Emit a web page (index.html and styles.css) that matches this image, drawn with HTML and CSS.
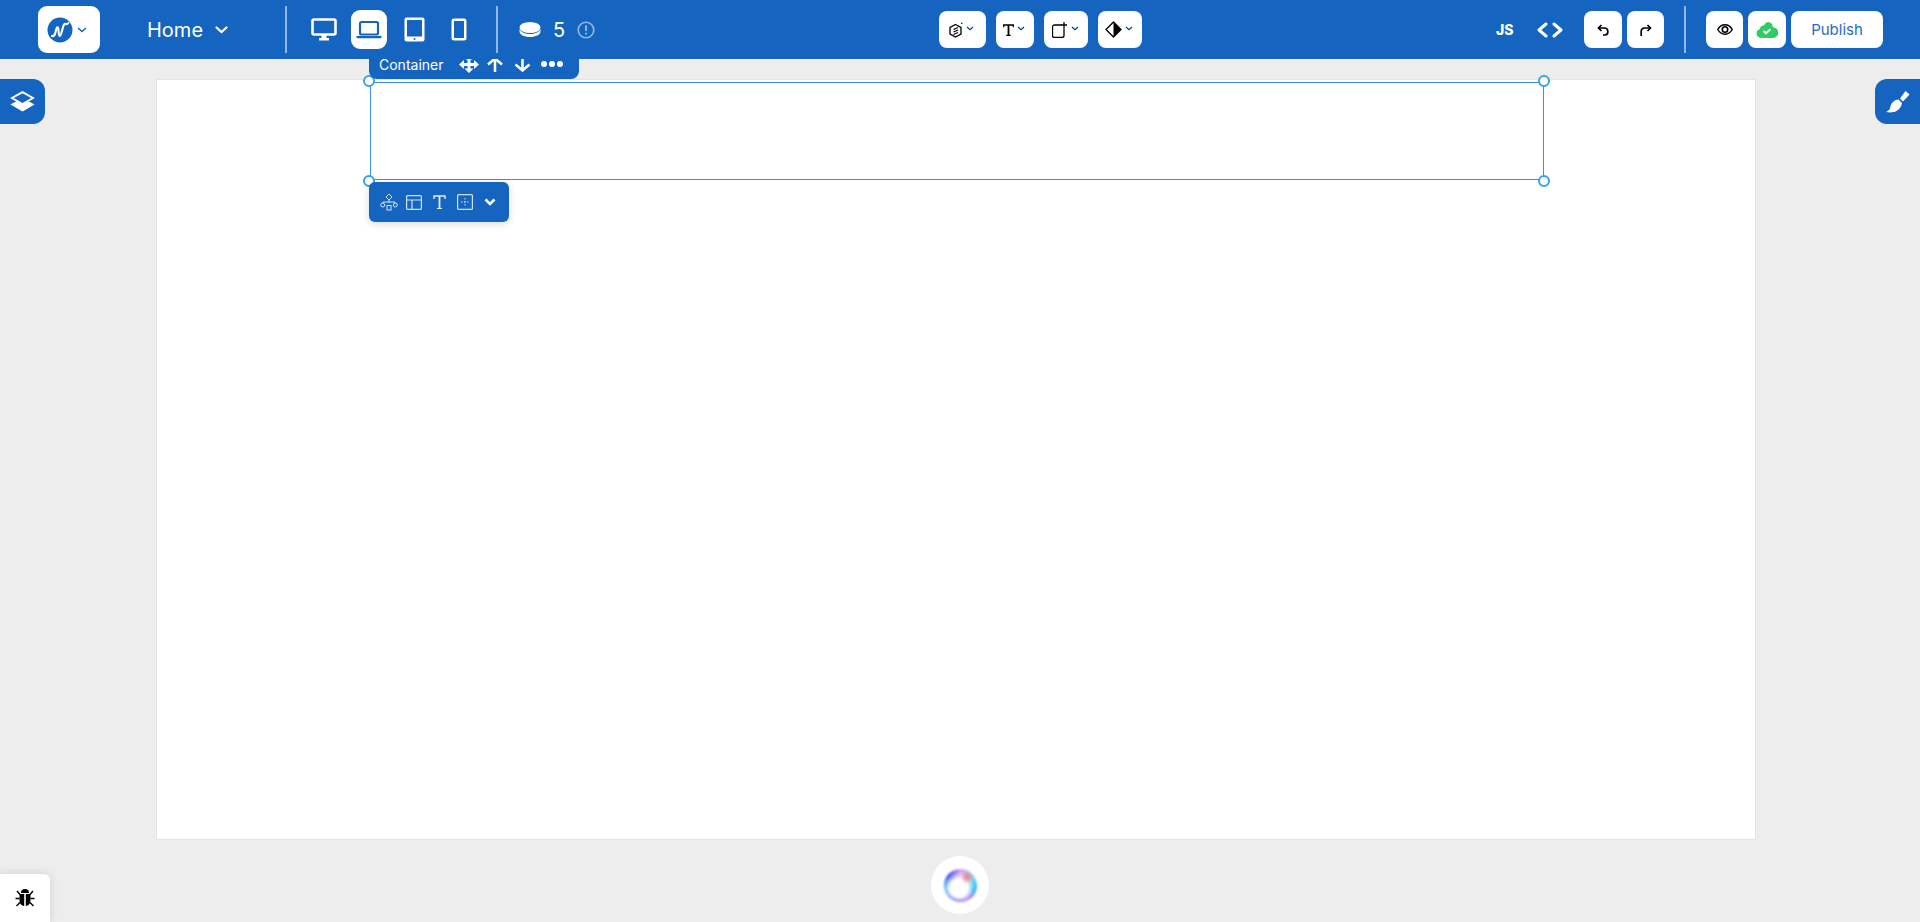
FILE: index.html
```html
<!DOCTYPE html>
<html lang="en">

<head>
    <meta charset="UTF-8">
    <meta name="viewport" content="width=device-width, initial-scale=1.0">
    <title>Page builder</title>
    <link rel="stylesheet" href="styles.css">
</head>

<body>
    <div class="header">
        <div class="hLeft">
            <span class="wBtn logoBtn">
                <svg width="26" height="26" viewBox="0 0 26 26">
                    <circle cx="13" cy="13" r="12.5" fill="#1565c0" />
                    <path d="M5 19c2.500.5 3-1.500 3.700-4.500s1.300-5 2.300-4 .2 8.500 1.800 8.500 2.500-8 4-11 2.500 1 4.500-2" fill="none" stroke="#fff" stroke-width="2.100" stroke-linecap="round" />
                </svg>
                <svg class="chevL" width="10" height="6" viewBox="0 0 10 6"><path d="M1 1l4 3.500L9 1" fill="none" stroke="#1565c0" stroke-width="1.400" /></svg>
            </span>
            <span class="home">Home
                <svg width="13" height="8" viewBox="0 0 13 8"><path d="M1.500 1.500l5 4.500 5-4.500" fill="none" stroke="#fff" stroke-width="2.200" stroke-linecap="round" /></svg>
            </span>
            <span class="sep sepHome"></span>
            <div class="devices">
                <span class="dev">
                    <svg width="26" height="23" viewBox="0 0 26 23"><rect x="1.500" y="1.500" width="23" height="15" rx="1.500" fill="none" stroke="#fff" stroke-width="2.600" /><path d="M10.500 17h5v3h-5zM8 20h10v2.500H8z" fill="#fff" /></svg>
                </span>
                <span class="dev devOn">
                    <svg width="26" height="19" viewBox="0 0 26 19"><rect x="4" y="2" width="18" height="12.500" rx="1.500" fill="none" stroke="#1565c0" stroke-width="2.200" /><path d="M0.500 16h25v1.300a1 1 0 0 1-1 1h-23a1 1 0 0 1-1-1z" fill="#1565c0" /></svg>
                </span>
                <span class="dev">
                    <svg width="21" height="25" viewBox="0 0 21 25"><rect x="0.500" y="0.500" width="20" height="24" rx="2" fill="#fff" /><rect x="3" y="3" width="15" height="16.500" fill="#1565c0" /><circle cx="10.500" cy="22" r="1" fill="#1565c0" /></svg>
                </span>
                <span class="dev">
                    <svg width="16" height="23" viewBox="0 0 16 23"><rect x="0.500" y="0.500" width="15" height="22" rx="2.500" fill="#fff" /><rect x="3" y="3" width="10" height="17" fill="#1565c0" /></svg>
                </span>
            </div>
            <span class="sep sepDev"></span>
            <svg class="disc" width="22" height="15" viewBox="0 0 22 15"><ellipse cx="11" cy="5.500" rx="10.500" ry="5.500" fill="#fff" /><path d="M.5 7v2.500C.5 12.500 5 15 11 15s10.500-2.500 10.500-5.500V7C20 10.500 16 12 11 12S2 10.500.5 7z" fill="#fff" /></svg>
            <span class="count">5</span>
            <svg class="info" width="18" height="18" viewBox="0 0 18 18"><circle cx="9" cy="9" r="7.800" fill="none" stroke="#fff" stroke-width="1.600" /><path d="M9 4.500v5.500M9 11.800v1.700" stroke="#fff" stroke-width="1.900" /></svg>
        </div>

        <div class="hCenter">
            <span class="wBtn toolBtn b47">
                <svg width="14" height="16" viewBox="0 0 14 16" fill="none" stroke="#000" stroke-width="1.300"><path d="M6.500 2.500l5.500 3v6.500l-5.500 3-5.500-3V5.500z" /><path d="M4.500 7.500l4.500-2M4.500 10l4.500-2M4.500 12.500l4.500-2" /><circle cx="12.800" cy="1.200" r=".8" fill="#000" stroke="none" /></svg>
                <svg class="chevS" width="8" height="5" viewBox="0 0 8 5"><path d="M1 1l3 2.800L7 1" fill="none" stroke="#0d3f86" stroke-width="1.200" /></svg>
            </span>
            <span class="wBtn toolBtn b38">
                <svg width="11" height="12" viewBox="0 0 11 12" fill="none" stroke="#000"><path d="M.7 3.200V1h9.600v2.200" stroke-width="1.300" /><path d="M5.500 1v10.500" stroke-width="1.800" /><path d="M3.300 11.400h4.400" stroke-width="1.200" /></svg>
                <svg class="chevS" width="8" height="5" viewBox="0 0 8 5"><path d="M1 1l3 2.800L7 1" fill="none" stroke="#0d3f86" stroke-width="1.200" /></svg>
            </span>
            <span class="wBtn toolBtn b44">
                <svg width="16" height="16" viewBox="0 0 16 16" fill="none" stroke="#000" stroke-width="1.300"><path d="M9.500 3H2.500a2 2 0 0 0-2 2v8.500a2 2 0 0 0 2 2h7.500a2 2 0 0 0 2-2V6.500" /><path d="M12 0v6.500M9 3h6" /></svg>
                <svg class="chevS" width="8" height="5" viewBox="0 0 8 5"><path d="M1 1l3 2.800L7 1" fill="none" stroke="#0d3f86" stroke-width="1.200" /></svg>
            </span>
            <span class="wBtn toolBtn b44">
                <svg width="17" height="17" viewBox="0 0 17 17"><path d="M8.500 1l7.500 7.500-7.500 7.500L1 8.500z" fill="#fff" stroke="#000" stroke-width="1.300" /><path d="M8.500 1l7.500 7.500-7.500 7.500z" fill="#000" /></svg>
                <svg class="chevS" width="8" height="5" viewBox="0 0 8 5"><path d="M1 1l3 2.800L7 1" fill="none" stroke="#0d3f86" stroke-width="1.200" /></svg>
            </span>
        </div>

        <div class="hRight">
            <span class="js">JS</span>
            <svg class="code" width="26" height="16" viewBox="0 0 26 16" fill="none" stroke="#fff" stroke-width="3" stroke-linecap="round" stroke-linejoin="round"><path d="M9 2L2 8l7 6M17 2l7 6-7 6" /></svg>
            <span class="wBtn sq undo">
                <svg width="12" height="12" viewBox="0 0 12 12" fill="none" stroke="#000" stroke-width="1.700"><path d="M4.500 1L1.500 4l3 3" /><path d="M1.500 4h6a3.300 3.300 0 0 1 3.300 3.300v.7a3 3 0 0 1-3 3H6" /></svg>
            </span>
            <span class="wBtn sq redo">
                <svg width="12" height="12" viewBox="0 0 12 12" fill="none" stroke="#000" stroke-width="1.700"><path d="M7.500 1l3 3-3 3" /><path d="M10.500 4H4.500A3.300 3.300 0 0 0 1.200 7.300V12" /></svg>
            </span>
            <span class="sep sepRight"></span>
            <span class="wBtn sq eye">
                <svg width="16" height="11" viewBox="0 0 16 11" fill="none" stroke="#000"><path d="M.8 5.500C2.600 2.300 5 .8 8 .8s5.400 1.500 7.200 4.700C13.400 8.700 11 10.200 8 10.200S2.600 8.700.8 5.500z" stroke-width="1.500" /><circle cx="8" cy="5.500" r="2.700" stroke-width="1.600" /></svg>
            </span>
            <span class="wBtn sq cloud">
                <svg width="22" height="16" viewBox="0 0 22 16"><path d="M5 16a4.500 4.500 0 0 1-1.200-8.800A4.200 4.200 0 0 1 8 3.500 5 5 0 0 1 12 0a4.800 4.800 0 0 1 4.800 5.200 5.400 5.400 0 0 1 .2 10.800z" fill="#2ecc64" /><path d="M7.500 9l2.500 2.300 4.500-4" fill="none" stroke="#fff" stroke-width="1.900" /></svg>
            </span>
            <span class="wBtn publish">Publish</span>
        </div>
    </div>

    <div class="canvas">
        <div class="sel">
            <span class="dot dotTl"></span>
            <span class="dot dotTr"></span>
            <span class="dot dotBl"></span>
            <span class="dot dotBr"></span>

            <div class="selTab">
                <span class="selName">Container</span>
                <svg class="tMove" width="20" height="17" viewBox="0 0 20 17" fill="#fff"><path d="M0 8.500l5-4.500v9zM20 8.500l-5-4.500v9zM10 0L6.500 3.500h7zM10 17l-4.500-4.500h9z" /><path d="M3 7h14v3H3zM8.500 2h3v12h-3z" /></svg>
                <svg class="tUp" width="18" height="15" viewBox="0 0 18 15" fill="none" stroke="#fff" stroke-width="2.500"><path d="M2 7.500L9 1.500l7 6M9 2v13" /></svg>
                <svg class="tDown" width="17" height="15" viewBox="0 0 17 15" fill="none" stroke="#fff" stroke-width="2.500"><path d="M1.500 7.500l7 6 7-6M8.500 13V0" /></svg>
                <svg class="tMore" width="22" height="6" viewBox="0 0 22 6" fill="#fff"><circle cx="3" cy="3" r="3" /><circle cx="11" cy="3" r="3" /><circle cx="19" cy="3" r="3" /></svg>
            </div>

            <div class="selBar">
                <svg class="barNet" width="18" height="18" viewBox="0 0 18 18" fill="none" stroke="#cfe2f7"><path d="M9 1l3 3-3 3-3-3zM9 7v3M3 10.500V9h12v1.500" /><circle cx="2.700" cy="12" r="2" /><circle cx="15.300" cy="12" r="2" /><rect x="7" y="12.500" width="4" height="4.500" /></svg>
                <svg width="16" height="15" viewBox="0 0 16 15" fill="none" stroke="#cfe2f7" stroke-width="1.200"><rect x=".6" y=".6" width="14.800" height="13.800" rx="1" /><path d="M.6 5h14.800M6 5v9.400" /></svg>
                <svg width="13" height="14" viewBox="0 0 13 14" fill="none" stroke="#e3eefb"><path d="M1 4V1h11v3" stroke-width="1.400" /><path d="M6.500 1v12.500" stroke-width="1.800" /><path d="M4 13.500h5" stroke-width="1.200" /></svg>
                <svg width="16" height="16" viewBox="0 0 16 16" fill="none" stroke="#cfe2f7"><rect x=".6" y=".6" width="14.800" height="14.800" rx="1" stroke-width="1.200" /><path d="M8 4v8M4 8h8" stroke-width="1" stroke-dasharray="1.500 1.500" /></svg>
                <svg width="12" height="8" viewBox="0 0 12 8"><path d="M1.500 1.500L6 6l4.500-4.500" fill="none" stroke="#fff" stroke-width="2.600" /></svg>
            </div>
        </div>
    </div>

    <div class="orbWrap"><div class="orb"></div></div>

    <!-- side tabs sit over the canvas area -->
    <span class="sideTab sideL">
        <svg width="25" height="21" viewBox="0 0 25 21"><path d="M12.500 7L24.500 13.500 12.500 20.500.5 13.500z" fill="#fff" /><path d="M12.500 1.200L23 7l-10.500 6L2 7z" fill="#1565c0" stroke="#fff" stroke-width="1.900" /></svg>
    </span>
    <span class="sideTab sideR">
        <svg width="24" height="22" viewBox="0 0 24 22" fill="#fff"><path d="M14 7.500L19.500 0l4 3.500-6.500 7z" /><path d="M12.500 8.500l3.500 3.500c-.5 3.500-2.500 6.500-5.500 8-3 1.500-6.500 1.800-10.500 1 3-1 4-3 4.500-5.500.5-3.500 3.500-6.500 8-7z" /></svg>
    </span>
    <span class="bug">
        <svg width="20" height="20" viewBox="0 0 20 20"><path d="M6 5a4 4 0 0 1 8 0z" fill="#000" /><path d="M4.500 6h4.700v12C6.500 17.800 4.500 15.500 4.500 12zM10.800 6h4.700v6c0 3.500-2 5.800-4.700 6z" fill="#000" /><path d="M2 3l3 3.500M18 3l-3 3.500M0.500 10.500h4M19.500 10.500h-4M1.500 18l3.500-3.500M18.500 18L15 14.500" stroke="#000" stroke-width="1.400" /></svg>
    </span>
</body>

</html>
```

FILE: styles.css
```css
* {
    margin: 0;
    padding: 0;
    box-sizing: border-box;
}

body {
    height: 922px;
    overflow: hidden;
    position: relative;
    background: #ededed;
    font-family: Inter, "Liberation Sans", sans-serif;
}

svg {
    display: block;
    flex: none;
}

.header {
    position: relative;
    z-index: 2;
    display: flex;
    align-items: center;
    height: 59px;
    padding: 0 37px 0 38px;
    background: #1565c0;
    color: #fff;
}

.hLeft,
.hCenter,
.hRight {
    display: flex;
    align-items: center;
}

.hLeft {
    width: 557px;
}

.hLeft > * {
    flex: none;
}

.hCenter {
    margin-left: 344px;
    gap: 10px;
}

.hRight {
    margin-left: auto;
}

.wBtn {
    display: flex;
    align-items: center;
    justify-content: center;
    height: 37px;
    background: #fff;
    border-radius: 8px;
}

.chevL {
    margin-left: 4px;
}

.chevS {
    margin-left: 3px;
    margin-bottom: 2px;
}

.toolBtn {
    padding-right: 2px;
}

.logoBtn {
    width: 62px;
    height: 47px;
    padding-right: 4px;
    border-radius: 9px;
}

.home {
    display: flex;
    align-items: center;
    gap: 12px;
    width: 82px;
    margin-left: 47px;
    font-size: 20px;
    line-height: 24px;
}

.sep {
    width: 2px;
    height: 47px;
    background: #8fb8e4;
}

.sepHome {
    margin-left: 56px;
}

.devices {
    display: flex;
    gap: 9px;
    margin-left: 19px;
}

.dev {
    display: flex;
    align-items: center;
    justify-content: center;
    width: 36px;
    height: 39px;
    border-radius: 9px;
}

.devOn {
    background: #fff;
}

.sepDev {
    margin-left: 19px;
}

.disc {
    margin-left: 21px;
}

.count {
    margin-left: 12px;
    font-size: 20px;
}

.info {
    margin-left: 12px;
    opacity: .55;
}

.b47 {
    width: 47px;
}

.b38 {
    width: 38px;
}

.b44 {
    width: 44px;
}

.js {
    font-size: 14px;
    font-weight: 800;
    width: 18px;
}

.code {
    margin-left: 23px;
}

.sq {
    width: 37px;
}

.undo {
    margin-left: 21px;
    width: 38px;
}

.redo {
    margin-left: 5px;
}

.sepRight {
    margin-left: 20px;
}

.eye {
    margin-left: 20px;
}

.cloud {
    margin-left: 5px;
    width: 38px;
}

.publish {
    width: 92px;
    margin-left: 5px;
    padding-bottom: 1px;
    font-size: 15px;
    color: #2a6cc4;
}

.canvas {
    width: 1600px;
    height: 761px;
    margin: 20px 0 0 156px;
    padding: 2px 0 0 213px;
    background: #fff;
    border: 1px solid #e4e4e4;
}

.sel {
    position: relative;
    width: 1174px;
    height: 98px;
    border: 1px solid #3d8cf2;
}

.dot {
    position: absolute;
    width: 12px;
    height: 12px;
    background: #fff;
    border: 2px solid #38a3e6;
    border-radius: 50%;
}

.dotTl {
    left: -8px;
    top: -8px;
}

.dotTr {
    right: -7px;
    top: -8px;
}

.dotBl {
    left: -8px;
    bottom: -8px;
}

.dotBr {
    right: -7px;
    bottom: -8px;
}

/* top of the tab runs under the header */
.selTab {
    position: absolute;
    left: -2px;
    top: -34px;
    display: flex;
    align-items: center;
    width: 210px;
    height: 30px;
    padding-left: 10px;
    color: #fff;
    font-size: 14px;
    background: #1565c0;
    border-radius: 0 0 8px 8px;
}

.selName {
    width: 70px;
    white-space: nowrap;
}

.tMove {
    margin-left: 10px;
}

.tUp {
    margin-left: 7px;
}

.tDown {
    margin-left: 10px;
}

.tMore {
    margin-left: 10px;
}

.selBar {
    position: absolute;
    left: -2px;
    top: 99px;
    display: flex;
    align-items: center;
    gap: 11px;
    width: 140px;
    height: 40px;
    padding-left: 11px;
    background: #1565c0;
    border-radius: 6px;
    box-shadow: 0 2px 8px rgba(0, 0, 0, .15);
}

.barNet {
    margin-right: -3px;
}

.orbWrap {
    display: flex;
    align-items: center;
    justify-content: center;
    width: 58px;
    height: 58px;
    margin: 16px auto 0;
    background: #fff;
    border-radius: 50%;
}

.orb {
    width: 33px;
    height: 33px;
    border-radius: 50%;
    background:
        radial-gradient(circle at 70% 25%, #f07a7a 0, rgba(240, 122, 122, 0) 20%),
        radial-gradient(circle at 45% 58%, #fff 0, #fff 34%, rgba(255, 255, 255, 0) 62%),
        conic-gradient(#e0a0f0, #8fd8f5, #20b8f5, #a050f0, #1030f0, #10a0f0, #3040f0, #e0a0f0);
    filter: blur(.8px);
}

.sideTab {
    position: absolute;
    top: 79px;
    display: flex;
    align-items: center;
    justify-content: center;
    width: 45px;
    height: 45px;
    background: #1565c0;
}

.sideL {
    left: 0;
    border-radius: 0 12px 12px 0;
}

.sideR {
    right: 0;
    border-radius: 12px 0 0 12px;
}

.bug {
    position: absolute;
    left: 0;
    bottom: 0;
    display: flex;
    align-items: center;
    justify-content: center;
    width: 50px;
    height: 48px;
    background: #fff;
    border-radius: 0 6px 0 0;
    box-shadow: 0 0 10px rgba(0, 0, 0, .12);
}
```
